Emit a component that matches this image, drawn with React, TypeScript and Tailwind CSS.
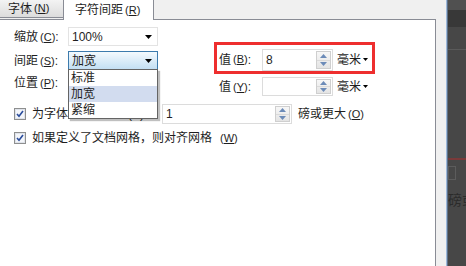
import type { ReactNode } from "react";

function Key({ k }: { k: string }) {
  return (
    <span className="ml-[2px] text-[11px]">
      (<span className="underline">{k}</span>)
    </span>
  );
}

function Arrow() {
  return (
    <svg width="7" height="4" viewBox="0 0 7 4">
      <path d="M0 0h7L3.5 4z" fill="#000" />
    </svg>
  );
}

function Combo({ value, active }: { value: string; active?: boolean }) {
  return (
    <div
      className={
        active
          ? "flex h-[19px] w-[90px] items-center justify-between border border-[#3d7bad] bg-linear-to-b from-[#f4fafe] to-[#c3dff3] pl-[3px] pr-[5px]"
          : "flex h-[19px] w-[90px] items-center justify-between border border-[#e3e3e3] bg-white pl-[3px] pr-[5px]"
      }
    >
      <span className="leading-none">{value}</span>
      <Arrow />
    </div>
  );
}

function Spinner() {
  return (
    <div className="my-px mr-px flex w-[15px] flex-col border border-[#cfcfcf] bg-linear-to-b from-[#f7f7f7] to-[#e4e4e4]">
      <div className="flex flex-1 items-center justify-center border-b border-[#dadada]">
        <svg width="7" height="4" viewBox="0 0 7 4">
          <path d="M3.5 0L7 4H0z" fill="#6c8bb8" />
        </svg>
      </div>
      <div className="flex flex-1 items-center justify-center">
        <svg width="7" height="4" viewBox="0 0 7 4">
          <path d="M0 0h7L3.5 4z" fill="#6c8bb8" />
        </svg>
      </div>
    </div>
  );
}

function SpinBox({ value, className }: { value: string; className: string }) {
  return (
    <div className={"flex border border-[#dcdcdc] bg-white " + className}>
      <div className="flex flex-1 items-center pl-[3px]">{value}</div>
      <Spinner />
    </div>
  );
}

function Check({ children }: { children: ReactNode }) {
  return (
    <label className="flex h-[20px] items-center gap-[6px] whitespace-nowrap">
      <svg width="12" height="12" viewBox="0 0 12 12" className="shrink-0">
        <rect x="0.5" y="0.5" width="11" height="11" fill="#f4f6fa" stroke="#8e8f8f" />
        <rect x="1.5" y="1.5" width="9" height="9" fill="none" stroke="#dfe3ea" />
        <path d="M3 6l2 2.3L9 3" fill="none" stroke="#2a4c9c" strokeWidth="1.6" />
      </svg>
      {children}
    </label>
  );
}

function Unit() {
  return (
    <span className="ml-[4px] flex items-center gap-[2px]">
      毫米
      <svg width="5" height="3" viewBox="0 0 5 3">
        <path d="M0 0h5L2.5 3z" fill="#000" />
      </svg>
    </span>
  );
}

export default function App() {
  return (
    <div className="flex h-[266px] w-[466px] overflow-hidden bg-[#f0f0f0] font-['Liberation_Sans','Noto_Sans_CJK_SC',sans-serif] text-[12px] text-[#1e1e1e]">
      <div className="flex w-[436px] flex-col">
        <div className="flex h-[19px] items-start">
          <div className="flex h-[18px] w-[63px] items-center border-b border-[#898c95] bg-linear-to-b from-[#f3f3f3] to-[#dcdcdc] pl-[8px]">
            字体<Key k="N" />
          </div>
          <div className="relative z-10 flex h-[20px] w-[91px] items-center border-x border-[#898c95] bg-white pl-[11px]">
            字符间距<Key k="R" />
          </div>
        </div>

        <div className="relative flex-1 border-t border-r border-[#898c95] bg-white pl-[14px]">
          <div className="flex">
            <div className="flex w-[200px] flex-col pt-[7px]">
              <div className="flex items-center">
                <span className="w-[54px] whitespace-nowrap">
                  缩放<Key k="C" />:
                </span>
                <Combo value="100%" />
              </div>
              <div className="mt-[5px] flex items-center">
                <span className="w-[54px] whitespace-nowrap">
                  间距<Key k="S" />:
                </span>
                <Combo value="加宽" active />
              </div>
              <div className="mt-[3px] flex items-center">
                <span className="w-[54px] whitespace-nowrap">
                  位置<Key k="P" />:
                </span>
                <Combo value="" />
              </div>
            </div>

            <div className="flex flex-col pt-[22px]">
              <div className="flex h-[32px] w-[161px] items-start border-[3px] border-[#ee2e2e] pl-[2px] pt-[4px]">
                <span className="flex h-[21px] w-[43px] items-center whitespace-nowrap">
                  值<Key k="B" />:
                </span>
                <SpinBox value="8" className="h-[22px] w-[71px]" />
                <span className="flex h-[21px] items-center">
                  <Unit />
                </span>
              </div>
              <div className="mt-[3px] flex items-center pl-[5px]">
                <span className="w-[43px] whitespace-nowrap">
                  值<Key k="Y" />:
                </span>
                <SpinBox value="" className="h-[19px] w-[71px]" />
                <Unit />
              </div>
            </div>
          </div>

          <div className="mt-[8px] flex items-center">
            <div className="w-[140px] overflow-hidden">
              <Check>为字体调整字间距(K):</Check>
            </div>
            <SpinBox value="1" className="ml-[8px] h-[20px] w-[130px]" />
            <span className="ml-[6px] whitespace-nowrap">
              磅或更大<Key k="O" />
            </span>
          </div>

          <div className="mt-[4px]">
            <Check>
              如果定义了文档网格，则对齐网格<Key k="W" />
            </Check>
          </div>

          <div className="absolute left-[68px] top-[49px] z-20 flex w-[90px] flex-col border border-[#646464] bg-white shadow-[2px_2px_1px_rgba(0,0,0,0.25)]">
            <div className="flex h-[16px] items-center pl-[2px]">标准</div>
            <div className="flex h-[16px] items-center bg-[#d2dcef] pl-[2px]">加宽</div>
            <div className="flex h-[16px] items-center pl-[2px]">紧缩</div>
          </div>
        </div>
      </div>

      <div className="w-[10px]" />
      <div className="w-px bg-[#9cb8db]" />
      <div className="w-px bg-[#5c6f86]" />
      <div className="flex flex-1 flex-col overflow-hidden bg-[#474747]">
        <div className="h-[10px] bg-[#505050]" />
        <div className="h-[17px] bg-[#383838]" />
        <div className="mt-[9px] h-[14px] border-b border-[#5a5a5a]" />
        <div className="mt-[108px] h-[2px] bg-[#7a3a3a]" />
        <div className="mt-[6px] h-[14px] w-[8px] border border-[#5c5c5c]" />
        <div className="mt-[12px] whitespace-nowrap text-[14px] leading-[16px] text-[#2b2b2b]">磅或更</div>
      </div>
    </div>
  );
}
